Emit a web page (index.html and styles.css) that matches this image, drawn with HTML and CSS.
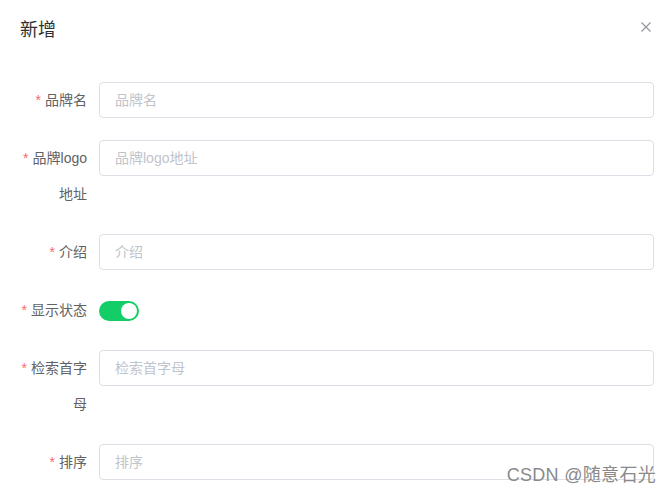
FILE: index.html
```html
<!DOCTYPE html>
<html lang="zh-CN">
<head>
<meta charset="utf-8">
<link rel="stylesheet" href="styles.css">
</head>
<body>
<div class="dialog">
  <header class="dialog-header">
    <span class="dialog-title">新增</span>
    <button class="dialog-close" aria-label="Close">
      <svg width="10" height="10" viewBox="0 0 10 10"><path d="M0.5 0.5 L9.5 9.5 M9.5 0.5 L0.5 9.5" stroke="#909399" stroke-width="1.1" fill="none"/></svg>
    </button>
  </header>
  <div class="dialog-body">
    <form class="form">
      <div class="form-item">
        <label class="form-label"><span class="req">*</span>品牌名</label>
        <div class="form-content"><input class="input" placeholder="品牌名"></div>
      </div>
      <div class="form-item">
        <label class="form-label"><span class="req">*</span>品牌logo地址</label>
        <div class="form-content"><input class="input" placeholder="品牌logo地址"></div>
      </div>
      <div class="form-item">
        <label class="form-label"><span class="req">*</span>介绍</label>
        <div class="form-content"><input class="input" placeholder="介绍"></div>
      </div>
      <div class="form-item">
        <label class="form-label"><span class="req">*</span>显示状态</label>
        <div class="form-content"><span class="switch"><span class="switch-knob"></span></span></div>
      </div>
      <div class="form-item">
        <label class="form-label"><span class="req">*</span>检索首字母</label>
        <div class="form-content"><input class="input" placeholder="检索首字母"></div>
      </div>
      <div class="form-item">
        <label class="form-label"><span class="req">*</span>排序</label>
        <div class="form-content"><input class="input" placeholder="排序"></div>
      </div>
    </form>
  </div>
</div>
<div class="watermark">CSDN @随意石光</div>
</body>
</html>
```

FILE: styles.css
```css
html, body {
  margin: 0;
  padding: 0;
  background: #fff;
  overflow: hidden;
  height: 494px;
}
body {
  font-family: "Liberation Sans", "Noto Sans CJK SC", sans-serif;
  font-size: 14px;
  color: #606266;
  position: relative;
}
.dialog {
  position: relative;
}
.dialog-header {
  padding: 18px 20px 10px;
  height: 24px;
}
.dialog-title {
  display: block;
  font-size: 18px;
  line-height: 24px;
  height: 24px;
  color: #303133;
}
.dialog-close {
  position: absolute;
  top: 22px;
  right: 21px;
  width: 10px;
  height: 10px;
  padding: 0;
  border: 0;
  background: none;
  display: block;
}
.dialog-close svg {
  display: block;
}
.dialog-body {
  padding: 30px 18px 0 20px;
}
.form-item {
  display: flex;
  align-items: flex-start;
  margin-bottom: 22px;
}
.form-label {
  flex: 0 0 79px;
  box-sizing: border-box;
  padding-right: 12px;
  text-align: right;
  line-height: 36px;
  color: #606266;
  font-size: 14px;
}
.req {
  color: #F56C6C;
  margin-right: 4px;
}
.form-content {
  flex: 1;
  height: 36px;
  display: flex;
  align-items: center;
}
.input {
  box-sizing: border-box;
  width: 100%;
  height: 36px;
  border: 1px solid #DCDFE6;
  border-radius: 4px;
  padding: 0 15px;
  font-family: inherit;
  font-size: 14px;
  color: #606266;
  outline: none;
  background: #fff;
  margin: 0;
}
.input::placeholder {
  color: #C0C4CC;
}
.switch {
  position: relative;
  display: block;
  width: 40px;
  height: 20px;
  margin-top: 2px;
  border-radius: 10px;
  background: #13CE66;
}
.switch-knob {
  position: absolute;
  top: 2px;
  right: 2px;
  width: 16px;
  height: 16px;
  border-radius: 50%;
  background: #fff;
}
.watermark {
  position: absolute;
  right: 16px;
  bottom: 9px;
  font-size: 18px;
  letter-spacing: 0.3px;
  line-height: 20px;
  color: #8a8a8a;
  font-family: "Liberation Sans", "Noto Sans CJK SC", sans-serif;
}
```
